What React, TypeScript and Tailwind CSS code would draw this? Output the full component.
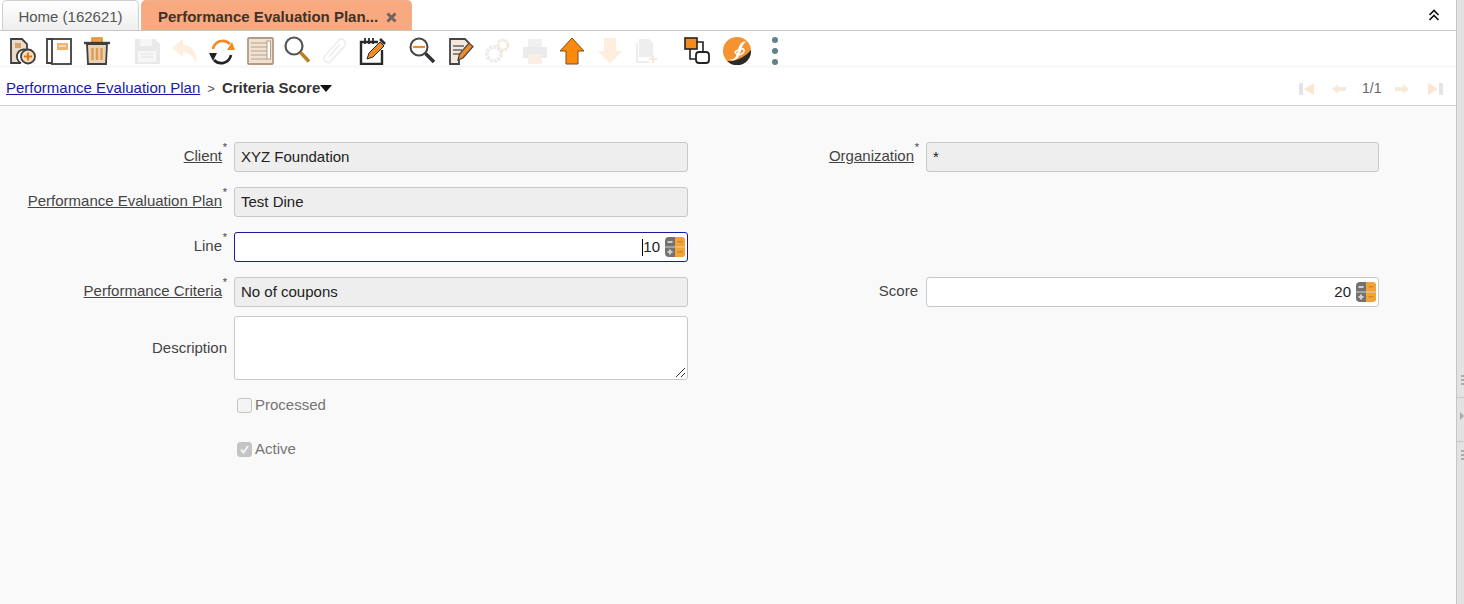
import React from "react";

const Ico = ({ children, ml = "" }: { children: React.ReactNode; ml?: string }) => (
  <div className={`w-[37.5px] h-[28px] flex items-start justify-center shrink-0 ${ml}`}>
    <svg width="30" height="30" viewBox="0 0 30 30" fill="none" className="-mt-[1px]">{children}</svg>
  </div>
);

const D = "#3f3f3f";
const O = "#f08a24";

const Calc = () => (
  <svg width="20" height="20" viewBox="0 0 20 20">
    <rect x="0" y="0" width="20" height="20" rx="4" fill="#727272" />
    <path d="M10 0h6a4 4 0 0 1 4 4v12a4 4 0 0 1-4 4h-6z" fill="#f3a333" />
    <path d="M0 9.500h20v1H0z" fill="#d8d0c4" />
    <rect x="2.500" y="4" width="5" height="2" fill="#cfcfcf" />
    <rect x="2.500" y="14" width="5" height="2" fill="#cfcfcf" />
    <rect x="4" y="12.500" width="2" height="5" fill="#cfcfcf" />
    <rect x="12.500" y="4" width="5" height="1.500" fill="#c98a2a" />
    <rect x="12.500" y="14" width="5" height="1.500" fill="#c98a2a" />
  </svg>
);

const Req = () => <span className="absolute -top-[3px] -right-[5px] text-[11px] leading-none">*</span>;

const Label = ({ text, link, w, star = true, pr = "pr-[12px]" }: { text: string; link?: boolean; w: string; star?: boolean; pr?: string }) => (
  <div className={`${w} ${pr} pb-[2px] shrink-0 flex justify-end text-[15px] text-[#444]`}>
    <span className={`relative ${link ? "underline" : ""}`}>
      {text}
      {star && <Req />}
    </span>
  </div>
);

const Ro = ({ v, w }: { v: string; w: string }) => (
  <div className={`${w} h-[30px] shrink-0 border border-[#c8c8c8] rounded-[3px] bg-[#eeeeee] pl-[6px] flex items-center text-[15px] text-[#222]`}>
    {v}
  </div>
);

const Check = ({ label, checked }: { label: string; checked?: boolean }) => (
  <div className="flex items-center h-[30px] pl-[237px] text-[15px] text-[#757575]">
    <span className={`w-[15px] h-[15px] mr-[3px] rounded-[3px] border border-[#c4c4c4] flex items-center justify-center ${checked ? "bg-[#c4c4c4]" : "bg-[#f4f4f4]"}`}>
      {checked && (
        <svg width="11" height="11" viewBox="0 0 11 11" fill="none">
          <path d="M2 5.5 L4.5 8.5 L9 2" stroke="#f2f2f2" strokeWidth="2" />
        </svg>
      )}
    </span>
    {label}
  </div>
);

const Grip = () => (
  <div className="h-[10px] flex flex-col items-start pl-[4px] gap-[2px]">
    <span className="w-[3px] h-[2px] bg-[#aaa]" />
    <span className="w-[3px] h-[2px] bg-[#aaa]" />
    <span className="w-[3px] h-[2px] bg-[#aaa]" />
  </div>
);

export default function App() {
  return (
    <div className="w-[1464px] h-[604px] overflow-hidden flex bg-white font-['Liberation_Sans',Arial,sans-serif]">
      <div className="w-[1456px] h-full flex flex-col shrink-0">
        {/* tabs */}
        <div className="h-[31px] shrink-0 border-b border-[#c8c8c8] flex items-end pl-[2px] gap-[2px]">
          <div className="w-[137px] h-[30px] pt-[3px] border border-b-0 border-[#cfcfcf] rounded-t-[5px] bg-gradient-to-b from-[#ffffff] to-[#eeeeee] flex items-center justify-center text-[15px] text-[#555]">
            Home (162621)
          </div>
          <div className="w-[271px] h-[30px] pt-[3px] rounded-t-[5px] bg-[#f9a97f] border border-b-0 border-[#eeb08f] flex items-center pl-[16px] text-[15px] font-bold text-[#3d3326]">
            Performance Evaluation Plan...
            <span className="ml-[8px]">
              <svg width="11" height="11" viewBox="0 0 11 11"><path d="M1.5 1.5 L9.5 9.5 M9.5 1.5 L1.5 9.5" stroke="#6f6560" strokeWidth="3" /></svg>
            </span>
          </div>
          <div className="ml-auto mr-[16px] self-center">
            <svg width="12" height="12" viewBox="0 0 12 12" fill="none"><path d="M1.5 6 L6 1.5 L10.5 6 M1.5 11 L6 6.5 L10.5 11" stroke="#111" strokeWidth="1.6" /></svg>
          </div>
        </div>
        {/* toolbar */}
        <div className="h-[34px] shrink-0 flex items-start pt-[6px] pl-[3px] bg-white overflow-hidden">
          <Ico>
            <path d="M4 3h11l5 5v6a7 7 0 0 0-6 13H4z" fill="#e9dcc8" stroke={D} strokeWidth="1.8" />
            <rect x="8" y="7" width="6" height="5" fill="#d9a46b" />
            <circle cx="21" cy="20.500" r="7" fill="#f3dcc0" stroke={D} strokeWidth="1.8" />
            <path d="M17 20.500h8M21 16.500v8" stroke="#e0751a" strokeWidth="2" />
          </Ico>
          <Ico>
            <path d="M9 3H3v24h6" stroke={D} strokeWidth="1.8" />
            <rect x="8" y="3" width="19" height="25" fill="#fff" stroke={D} strokeWidth="1.8" />
            <rect x="13" y="7" width="11" height="7" fill="#f3b26e" />
            <path d="M15 10h7" stroke="#fff" />
          </Ico>
          <Ico>
            <path d="M10 6V2h10v4" fill="#f3a04a" stroke="#f08a24" strokeWidth="1.5" />
            <path d="M2 7h26" stroke={D} strokeWidth="2.400" />
            <path d="M5 8h20l-1 20H6z" fill="#e8d2b6" stroke={D} strokeWidth="1.800" />
            <path d="M10.500 12v12M15 12v12M19.500 12v12" stroke="#e39a4e" strokeWidth="2.400" />
          </Ico>
          <Ico ml="ml-[13px]">
            <path d="M3 3h20l5 5v20H3z" fill="#e9e9e9" />
            <rect x="8" y="3" width="12" height="7" fill="#f6f6f6" />
            <rect x="6" y="15" width="18" height="11" fill="#f6f6f6" />
            <path d="M9 18h12M9 21h12" stroke="#e3e3e3" />
          </Ico>
          <Ico>
            <path d="M13 3 L2 12 L13 21 V16 C19 16 24 20 26 28 C28 16 22 9 13 9z" fill="#fdeedd" />
          </Ico>
          <Ico>
            <path d="M6 13a10 10 0 0 1 17-5" stroke={O} strokeWidth="2.600" />
            <path d="M20 14h8l-3-8z" fill={O} />
            <path d="M24 19a10 10 0 0 1-17 5" stroke="#222" strokeWidth="2.600" />
            <path d="M2 17h8l-4 8z" fill="#222" />
          </Ico>
          <Ico>
            <rect x="3" y="2" width="25" height="26" rx="1" fill="#f0e2d0" stroke="#b39a85" strokeWidth="1.800" />
            <path d="M6 7h16M6 11h16M6 15h16M6 19h16M6 23h16" stroke="#b9a08a" />
            <rect x="22" y="5" width="3.500" height="18" fill="#fff" stroke="#b39a85" />
          </Ico>
          <Ico>
            <circle cx="12" cy="10" r="8.500" fill="#fff" stroke="#555" strokeWidth="2.200" />
            <path d="M18.500 16.500 L27 25.500" stroke="#b8801f" strokeWidth="3.500" />
          </Ico>
          <Ico>
            <path d="M10 26 L25 9 a4 4 0 0 0-6-5 L5 20 a4 4 0 0 0 5 6z M9 21 L20 8 M13 23 L24 11" stroke="#eeeeee" strokeWidth="1.800" />
          </Ico>
          <Ico>
            <path d="M21 6H4v22h21V14" stroke="#2a2a2a" strokeWidth="2.400" />
            <path d="M8 2v6M12 2v6M16 2v6" stroke="#2a2a2a" strokeWidth="1.800" />
            <path d="M10 23 L12 17 L23 6 L27 10 L16 21z" fill={O} stroke="#2a2a2a" strokeWidth="1" />
            <path d="M23 3l5 5" stroke="#2a2a2a" strokeWidth="2.600" />
          </Ico>
          <Ico ml="ml-[12.5px]">
            <circle cx="12" cy="11" r="8.500" fill="#fff" stroke="#444" strokeWidth="2" />
            <path d="M6 11h12" stroke={O} strokeWidth="2.200" />
            <path d="M18.500 17.500 L27 26" stroke="#333" strokeWidth="3.500" />
          </Ico>
          <Ico>
            <path d="M5 3h15l4 4v4L14 23v5H5z" fill="#f2e9dc" stroke="#444" strokeWidth="1.800" />
            <path d="M8 10h11M8 14h9M8 18h6" stroke="#666" strokeWidth="1.400" />
            <path d="M13 24 L14.500 18 L24 7 L28 10.500 L18 22z" fill={O} stroke="#444" strokeWidth="1.200" />
          </Ico>
          <Ico>
            <circle cx="12" cy="18" r="7" stroke="#ececec" strokeWidth="4" strokeDasharray="3 1" />
            <circle cx="21" cy="9" r="5" stroke="#f4e6d8" strokeWidth="3" strokeDasharray="2.500 1" />
          </Ico>
          <Ico>
            <rect x="8" y="3" width="14" height="8" fill="#f0f0f0" />
            <path d="M3 11h24v11H3z" fill="#ebebeb" />
            <rect x="8" y="18" width="14" height="10" fill="#f9efe4" />
          </Ico>
          <Ico>
            <path d="M15 2 L27 15 H21 V28 H9 V15 H3 Z" fill="#fb8a0c" stroke="#7a4d18" strokeWidth="1" />
          </Ico>
          <Ico>
            <path d="M9 2H21V15H27L15 28 L3 15H9Z" fill="#fdeedd" />
          </Ico>
          <Ico>
            <path d="M7 3h10l4 4v14H7z" fill="#eeeeee" />
            <path d="M5 7v19h12" stroke="#eeeeee" strokeWidth="2" />
            <path d="M21 19v8M17 23h8" stroke="#f6e8da" strokeWidth="2" />
          </Ico>
          <Ico ml="ml-[12px]">
            <rect x="3" y="2" width="12" height="11" fill="#f58a1f" stroke="#222" strokeWidth="1.600" />
            <path d="M15 6h6v9M8 13v10h6" stroke="#222" strokeWidth="1.600" />
            <rect x="14" y="16" width="13" height="11" rx="3" fill="#fff" stroke="#222" strokeWidth="1.800" />
          </Ico>
          <Ico ml="ml-[2.5px]">
            <circle cx="15" cy="15" r="14" fill="#f59331" />
            <path d="M29 14 A14 14 0 0 1 5 25 C14 26 23 21 29 14z" fill="#2a2a2a" />
            <path d="M7 23 C13 25 15 19 16 14 C17 8 21 4 24 6 C20 8 20 13 18 18 C16 24 10 26 7 23z" fill="#fff" />
            <path d="M13 16 C18 11 25 12 21 17 C18 20 14 19 13 16z" stroke="#fff" strokeWidth="1.500" />
          </Ico>
          <div className="w-[37.5px] h-[28px] ml-[1px] flex flex-col items-center justify-start gap-[5px] shrink-0">
            <span className="w-[6px] h-[6px] rounded-full bg-[#5f8288]" />
            <span className="w-[6px] h-[6px] rounded-full bg-[#5f8288]" />
            <span className="w-[6px] h-[6px] rounded-full bg-[#5f8288]" />
          </div>
        </div>
        <div className="h-[3px] shrink-0 bg-[#f8f8f8]" />
        {/* breadcrumb */}
        <div className="h-[38px] shrink-0 border-b border-[#cfcfcf] flex items-center pl-[6px] pr-[13px] pt-[4px] text-[15px]">
          <span className="text-[#1a1aa6] underline">Performance Evaluation Plan</span>
          <span className="ml-[7px] text-[#555] text-[13px]">&gt;</span>
          <span className="ml-[7px] font-bold text-[#333]">Criteria Score</span>
          <svg width="12" height="7" viewBox="0 0 12 7"><path d="M0 0h12L6 7z" fill="#111" /></svg>
          <div className="ml-auto flex items-center">
            <svg width="16" height="14" viewBox="0 0 16 14"><rect x="0" y="1" width="4" height="12" fill="#e4e4e4" /><path d="M15 1v12L5 7z" fill="#fbe6d2" /></svg>
            <svg className="ml-[17px]" width="14" height="12" viewBox="0 0 14 12"><path d="M6 1v3h8v4H6v3L0 6z" fill="#f8e9da" /></svg>
            <span className="ml-[16px] w-[19px] text-[14px] text-[#666]">1/1</span>
            <svg className="ml-[14px]" width="14" height="12" viewBox="0 0 14 12"><path d="M8 1v3H0v4h8v3l6-5z" fill="#f8e9da" /></svg>
            <svg className="ml-[18px]" width="16" height="14" viewBox="0 0 16 14"><path d="M1 1v12L11 7z" fill="#fbe6d2" /><rect x="12" y="1" width="4" height="12" fill="#e4e4e4" /></svg>
          </div>
        </div>
        {/* form */}
        <div className="flex-1 bg-[#f9f9f9] pt-[36px] flex flex-col">
          <div className="flex items-center h-[30px]">
            <Label text="Client" link w="w-[234px]" />
            <Ro v="XYZ Foundation" w="w-[454px]" />
            <Label text="Organization" link w="w-[238px]" />
            <Ro v="*" w="w-[453px]" />
          </div>
          <div className="flex items-center h-[30px] mt-[15px]">
            <Label text="Performance Evaluation Plan" link w="w-[234px]" />
            <Ro v="Test Dine" w="w-[454px]" />
          </div>
          <div className="flex items-center h-[30px] mt-[15px]">
            <Label text="Line" w="w-[234px]" />
            <div className="w-[454px] h-[30px] border border-[#1a1a9e] rounded-[3px] bg-white flex items-center justify-end pr-[2px] text-[15px] text-[#222]">
              <span className="w-px h-[17px] bg-black" />
              <span className="mr-[5px] mt-[1px]">10</span>
              <Calc />
            </div>
          </div>
          <div className="flex items-center h-[30px] mt-[15px]">
            <Label text="Performance Criteria" link w="w-[234px]" />
            <Ro v="No of coupons" w="w-[454px]" />
            <Label text="Score" star={false} w="w-[238px]" pr="pr-[8px]" />
            <div className="w-[453px] h-[30px] border border-[#c8c8c8] rounded-[3px] bg-white flex items-center justify-end pr-[2px] text-[15px] text-[#222]">
              <span className="mr-[5px] mt-[1px]">20</span>
              <Calc />
            </div>
          </div>
          <div className="flex mt-[9px] h-[64px]">
            <div className="w-[234px] shrink-0 flex justify-end items-center pr-[7px] text-[15px] text-[#444]">Description</div>
            <div className="w-[454px] h-[64px] border border-[#c8c8c8] rounded-[3px] bg-white flex items-end justify-end">
              <svg width="11" height="11" viewBox="0 0 11 11" fill="none" className="mb-px mr-px"><path d="M1 10 L10 1 M6 10 L10 6" stroke="#333" strokeWidth="1" /></svg>
            </div>
          </div>
          <div className="mt-[10px]"><Check label="Processed" /></div>
          <div className="mt-[14.5px]"><Check label="Active" checked /></div>
        </div>
      </div>
      {/* splitter */}
      <div className="w-[8px] h-full bg-[#e2e2e2] border-l border-[#c6c6c6] flex flex-col pt-[375px]">
        <Grip />
        <div className="h-px bg-[#c8c8c8] mt-[12px]" />
        <div className="h-[43px] flex items-center justify-end pb-[8px]">
          <svg width="4" height="8" viewBox="0 0 4 8"><path d="M0 0l4 4-4 4z" fill="#a8a8a8" /></svg>
        </div>
        <div className="h-px bg-[#c8c8c8]" />
        <div className="mt-[8px]"><Grip /></div>
      </div>
    </div>
  );
}
